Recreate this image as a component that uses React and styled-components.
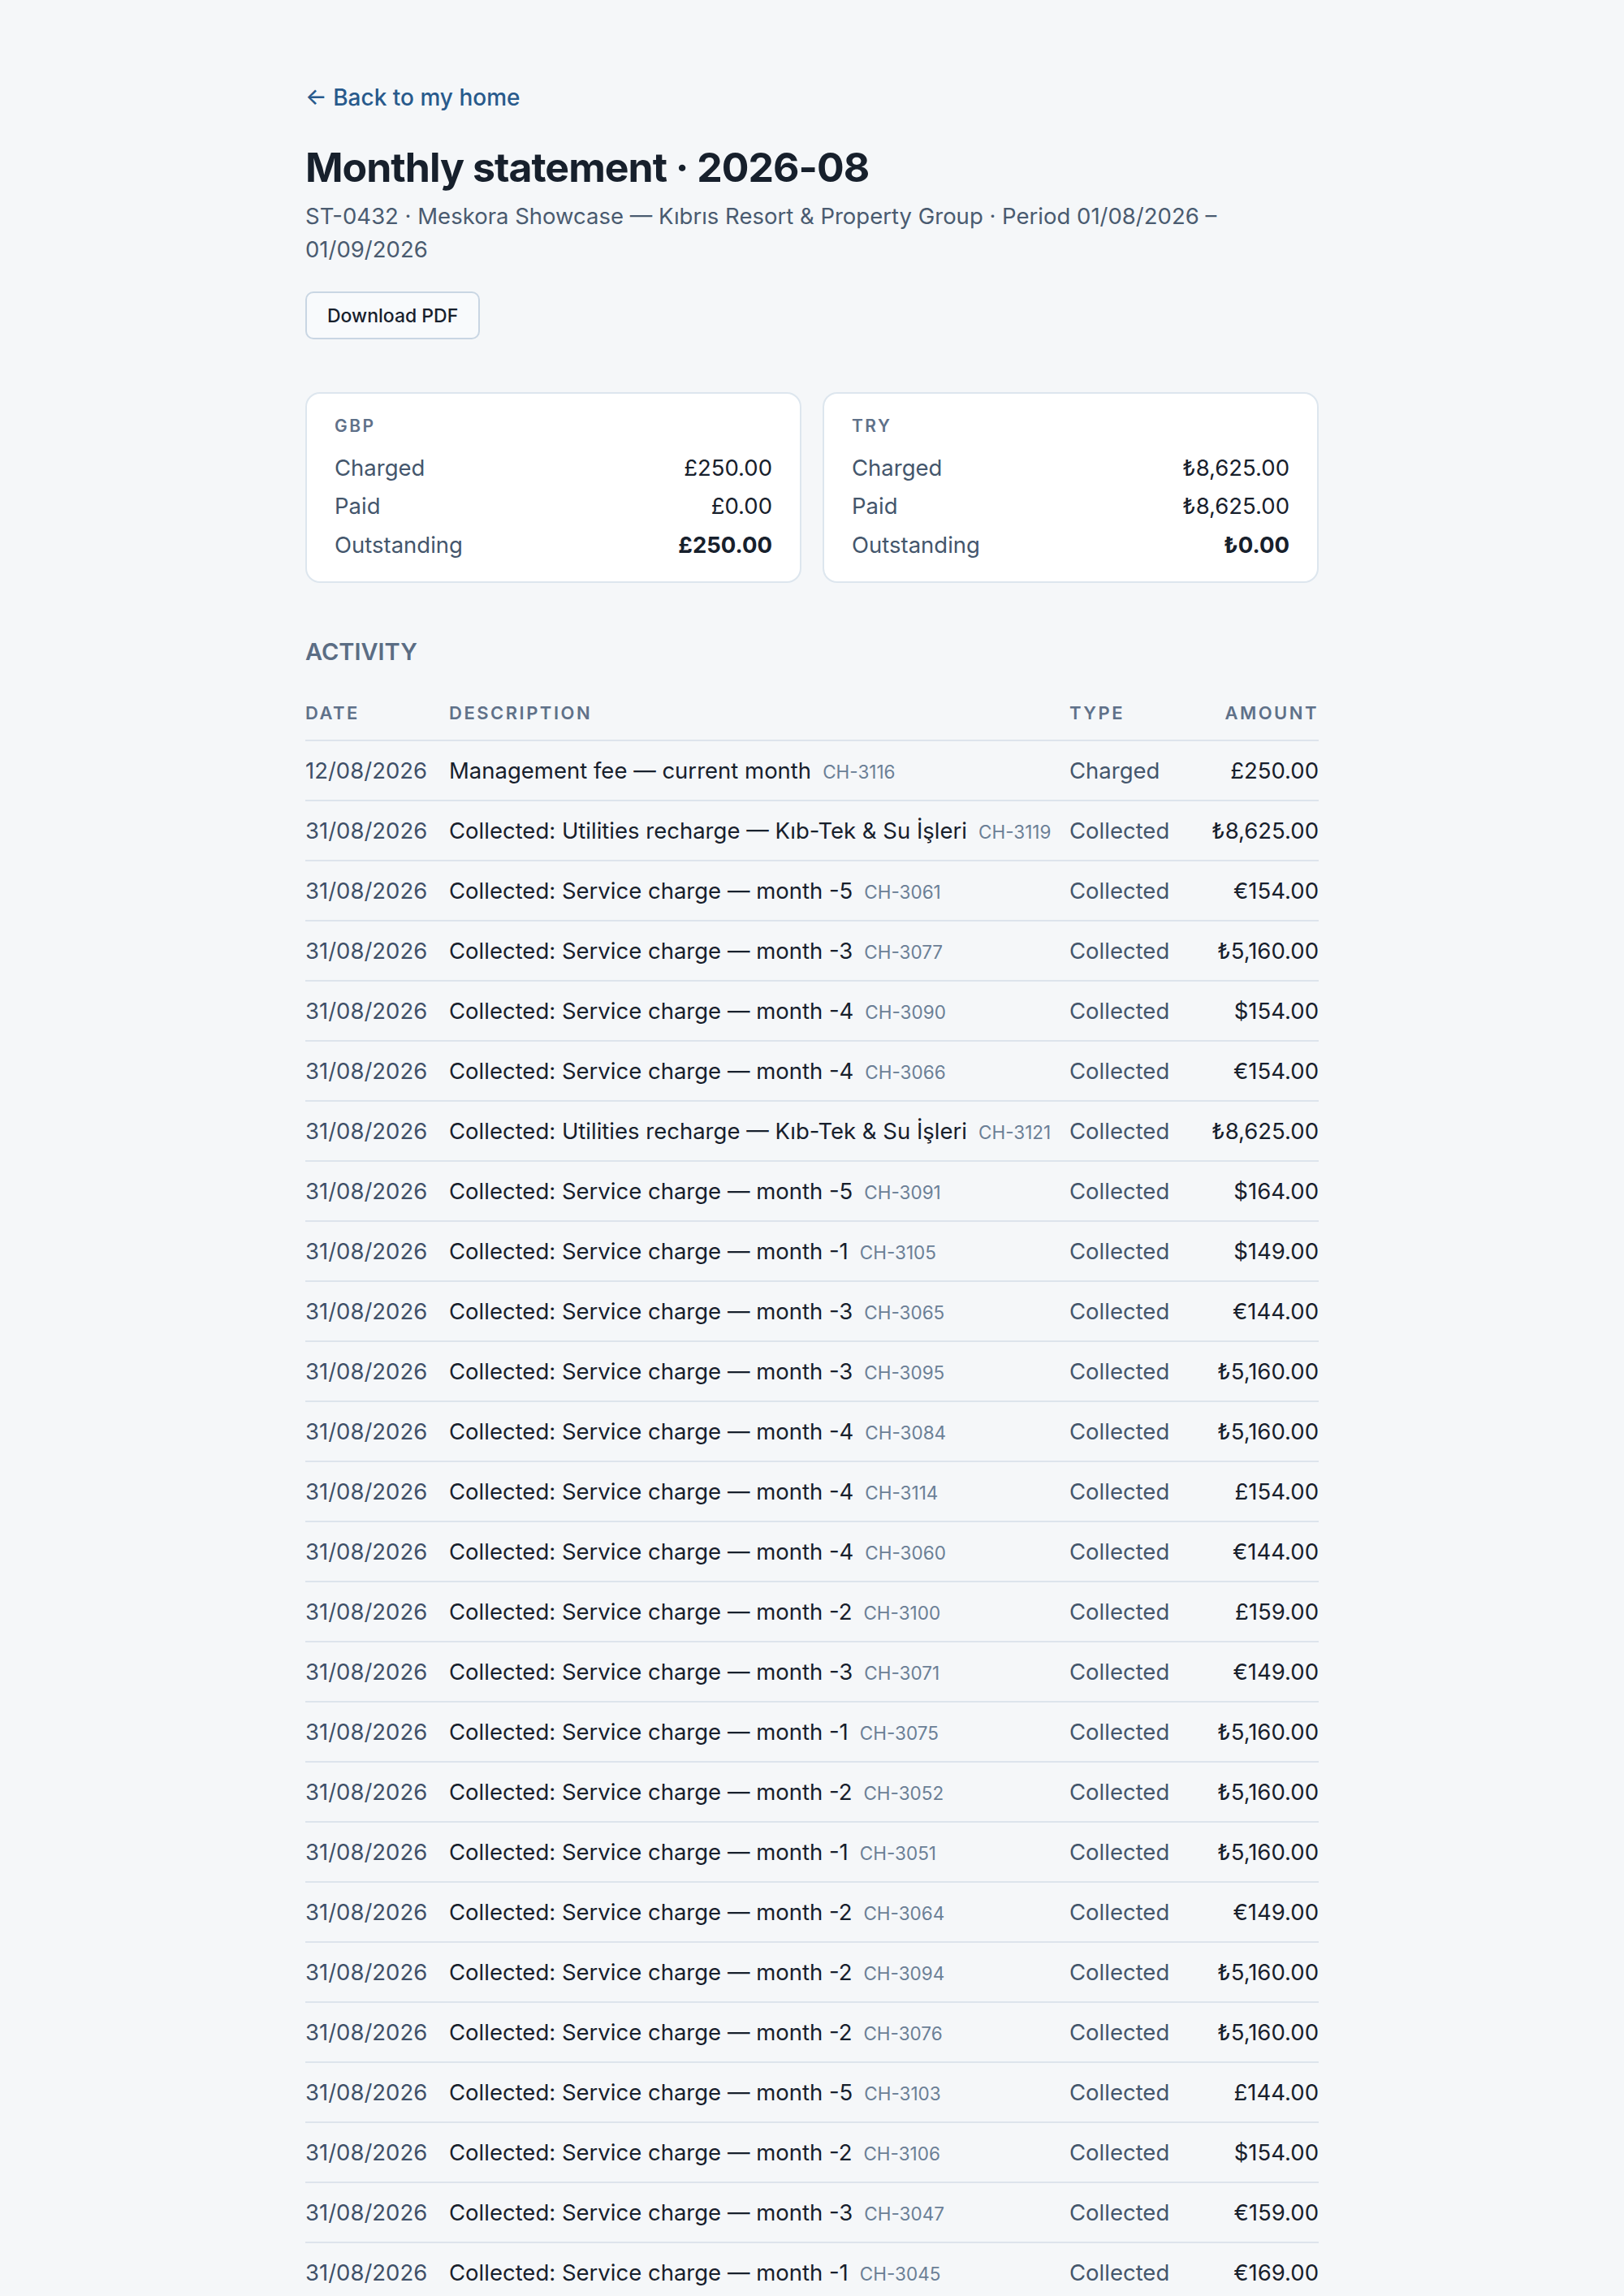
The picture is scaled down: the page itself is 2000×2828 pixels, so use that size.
import React from 'react';
import styled, { createGlobalStyle } from 'styled-components';

const GlobalStyle = createGlobalStyle`
  html, body {
    margin: 0;
    padding: 0;
    background: #f5f7f9;
  }
  body {
    font-family: Inter, "Noto Sans", "DejaVu Sans", sans-serif;
    color: #17202c;
  }
`;

const Page = styled.div`
  max-width: 1248px;
  margin: 0 auto;
  padding: 100px 0 120px;
`;

const BackLink = styled.a`
  display: inline-block;
  font-size: 28px;
  line-height: 40px;
  color: #285a8c;
  text-decoration: none;
  font-weight: 500;
`;

const Title = styled.h1`
  margin: 36px 0 0;
  font-size: 50px;
  line-height: 60px;
  font-weight: 700;
  letter-spacing: -1px;
  color: #17202c;
`;

const Subtitle = styled.p`
  margin: 10px 0 0;
  font-size: 27.5px;
  line-height: 41px;
  color: #4a5b70;
  max-width: 1140px;
`;

const Button = styled.button`
  margin-top: 31px;
  height: 59px;
  padding: 0 25px;
  background: #f8fafc;
  border: 2px solid #c9d6e3;
  border-radius: 10px;
  font-family: inherit;
  font-size: 23px;
  font-weight: 500;
  color: #17202c;
  cursor: pointer;
`;

const Cards = styled.div`
  display: grid;
  grid-template-columns: 1fr 1fr;
  gap: 26px;
  margin-top: 65px;
`;

const Card = styled.div`
  background: #ffffff;
  border: 2px solid #dde6ee;
  border-radius: 18px;
  padding: 25px 34px 20px;
  height: 235px;
  box-sizing: border-box;
`;

const CardLabel = styled.div`
  font-size: 21px;
  line-height: 30px;
  font-weight: 600;
  letter-spacing: 2.5px;
  color: #5f7189;
  margin-bottom: 12px;
`;

const CardRow = styled.div`
  display: flex;
  justify-content: space-between;
  align-items: center;
  height: 47.5px;
  font-size: 27.5px;
`;

const RowLabel = styled.span`
  color: #44566c;
`;

const RowValue = styled.span`
  color: #17202c;
  font-weight: ${p => (p.$strong ? 700 : 400)};
`;

const SectionTitle = styled.h2`
  margin: 65px 0 0;
  font-size: 29px;
  line-height: 40px;
  font-weight: 600;
  color: #5b6d84;
  text-transform: uppercase;
`;

const Table = styled.div`
  margin-top: 22px;
`;

const Row = styled.div`
  display: grid;
  grid-template-columns: 177px 764px 1fr auto;
  align-items: center;
  height: ${p => (p.$head ? '68px' : '74px')};
  border-bottom: 2px solid #dde4ec;
  box-sizing: border-box;
`;

const HeadCell = styled.div`
  font-size: 22px;
  font-weight: 600;
  letter-spacing: 2.5px;
  color: #5f7189;
  text-transform: uppercase;
  text-align: ${p => (p.$right ? 'right' : 'left')};
`;

const DateCell = styled.div`
  font-size: 27.5px;
  color: #3f5068;
`;

const DescCell = styled.div`
  font-size: 27.5px;
  color: #17202c;
  white-space: nowrap;
`;

const Ref = styled.span`
  margin-left: 14px;
  font-size: 22.5px;
  color: #6b7f96;
`;

const TypeCell = styled.div`
  font-size: 27.5px;
  color: #44566c;
`;

const AmountCell = styled.div`
  font-size: 27.5px;
  color: #17202c;
  text-align: right;
`;

const totals = [
  { cur: 'GBP', charged: '£250.00', paid: '£0.00', out: '£250.00' },
  { cur: 'TRY', charged: '₺8,625.00', paid: '₺8,625.00', out: '₺0.00' },
];

const util = 'Collected: Utilities recharge — Kıb-Tek & Su İşleri';
const svc = n => `Collected: Service charge — month -${n}`;

const activity = [
  ['12/08/2026', 'Management fee — current month', 'CH-3116', 'Charged', '£250.00'],
  ['31/08/2026', util, 'CH-3119', 'Collected', '₺8,625.00'],
  ['31/08/2026', svc(5), 'CH-3061', 'Collected', '€154.00'],
  ['31/08/2026', svc(3), 'CH-3077', 'Collected', '₺5,160.00'],
  ['31/08/2026', svc(4), 'CH-3090', 'Collected', '$154.00'],
  ['31/08/2026', svc(4), 'CH-3066', 'Collected', '€154.00'],
  ['31/08/2026', util, 'CH-3121', 'Collected', '₺8,625.00'],
  ['31/08/2026', svc(5), 'CH-3091', 'Collected', '$164.00'],
  ['31/08/2026', svc(1), 'CH-3105', 'Collected', '$149.00'],
  ['31/08/2026', svc(3), 'CH-3065', 'Collected', '€144.00'],
  ['31/08/2026', svc(3), 'CH-3095', 'Collected', '₺5,160.00'],
  ['31/08/2026', svc(4), 'CH-3084', 'Collected', '₺5,160.00'],
  ['31/08/2026', svc(4), 'CH-3114', 'Collected', '£154.00'],
  ['31/08/2026', svc(4), 'CH-3060', 'Collected', '€144.00'],
  ['31/08/2026', svc(2), 'CH-3100', 'Collected', '£159.00'],
  ['31/08/2026', svc(3), 'CH-3071', 'Collected', '€149.00'],
  ['31/08/2026', svc(1), 'CH-3075', 'Collected', '₺5,160.00'],
  ['31/08/2026', svc(2), 'CH-3052', 'Collected', '₺5,160.00'],
  ['31/08/2026', svc(1), 'CH-3051', 'Collected', '₺5,160.00'],
  ['31/08/2026', svc(2), 'CH-3064', 'Collected', '€149.00'],
  ['31/08/2026', svc(2), 'CH-3094', 'Collected', '₺5,160.00'],
  ['31/08/2026', svc(2), 'CH-3076', 'Collected', '₺5,160.00'],
  ['31/08/2026', svc(5), 'CH-3103', 'Collected', '£144.00'],
  ['31/08/2026', svc(2), 'CH-3106', 'Collected', '$154.00'],
  ['31/08/2026', svc(3), 'CH-3047', 'Collected', '€159.00'],
  ['31/08/2026', svc(1), 'CH-3045', 'Collected', '€169.00'],
];

export default function App() {
  return (
    <>
      <GlobalStyle />
      <Page>
        <BackLink href="#">← Back to my home</BackLink>
        <Title>Monthly statement · 2026-08</Title>
        <Subtitle>
          ST-0432 · Meskora Showcase — Kıbrıs Resort &amp; Property Group · Period 01/08/2026 – 01/09/2026
        </Subtitle>
        <Button>Download PDF</Button>

        <Cards>
          {totals.map(t => (
            <Card key={t.cur}>
              <CardLabel>{t.cur}</CardLabel>
              <CardRow>
                <RowLabel>Charged</RowLabel>
                <RowValue>{t.charged}</RowValue>
              </CardRow>
              <CardRow>
                <RowLabel>Paid</RowLabel>
                <RowValue>{t.paid}</RowValue>
              </CardRow>
              <CardRow>
                <RowLabel>Outstanding</RowLabel>
                <RowValue $strong>{t.out}</RowValue>
              </CardRow>
            </Card>
          ))}
        </Cards>

        <SectionTitle>Activity</SectionTitle>
        <Table>
          <Row $head>
            <HeadCell>Date</HeadCell>
            <HeadCell>Description</HeadCell>
            <HeadCell>Type</HeadCell>
            <HeadCell $right>Amount</HeadCell>
          </Row>
          {activity.map(([date, desc, ref, type, amount], i) => (
            <Row key={i}>
              <DateCell>{date}</DateCell>
              <DescCell>
                {desc}
                <Ref>{ref}</Ref>
              </DescCell>
              <TypeCell>{type}</TypeCell>
              <AmountCell>{amount}</AmountCell>
            </Row>
          ))}
        </Table>
      </Page>
    </>
  );
}
